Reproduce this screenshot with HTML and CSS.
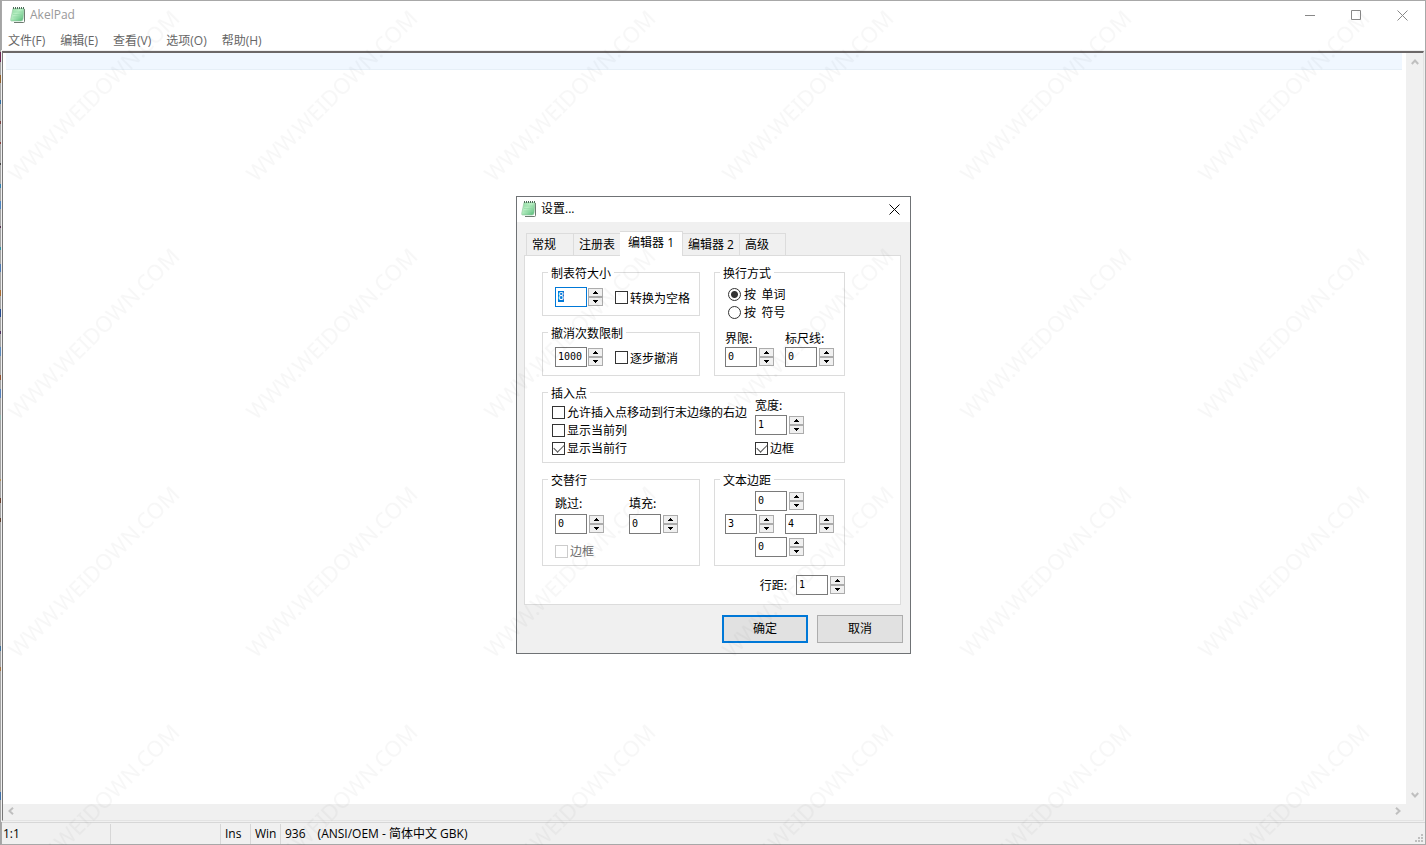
FILE: index.html
```
<!DOCTYPE html>
<html lang="zh-CN">
<head>
<meta charset="utf-8">
<title>AkelPad</title>
<link rel="stylesheet" href="styles.css">
</head>
<body>
<svg width="0" height="0" class="defs" aria-hidden="true">
  <defs>
    <linearGradient id="paper" x1="0" y1="0" x2="1" y2="1">
      <stop offset="0" stop-color="#8fd9a0"/><stop offset=".4" stop-color="#b9efc4"/><stop offset="1" stop-color="#4fb873"/>
    </linearGradient>
    <symbol id="notepad" viewBox="0 0 16 16">
      <path d="M4 15.500H13.500Q14.500 15.500 14.500 14.500V2" fill="none" stroke="#6d7a70"/>
      <path d="M3 1.500H14L13 12Q12.800 14 11 14H1.500Q.5 14 .7 12.500Z" fill="url(#paper)" stroke="#8cc49b" stroke-width=".6"/>
      <path d="M3 5H13M3 7.500H12.500M2.500 10H12" stroke="#8fd6a2" stroke-width=".6"/>
      <path d="M3 1H14" stroke="#4c6c58" stroke-width="2" stroke-dasharray="1 1"/>
    </symbol>
    <symbol id="up" viewBox="0 0 5 3"><path d="M2 0h1v1h1v1h1v1H0V2h1V1h1z"/></symbol>
    <symbol id="down" viewBox="0 0 5 3"><path d="M0 0h5v1H4v1H3v1H2V2H1V1H0z"/></symbol>
  </defs>
</svg>

<div class="window">
  <header class="titlebar">
    <svg class="app-icon"><use href="#notepad"/></svg>
    <h1 class="app-title">AkelPad</h1>
    <div class="caption">
      <button aria-label="最小化"><svg viewBox="0 0 11 11"><path d="M0 5.500H10"/></svg></button>
      <button aria-label="最大化"><svg viewBox="0 0 11 11"><path d="M.5.5H9.500V9.500H.5Z"/></svg></button>
      <button aria-label="关闭"><svg viewBox="0 0 11 11"><path d="M.5.5L10.500 10.500M10.500.5L.5 10.500"/></svg></button>
    </div>
  </header>
  <nav class="menubar">
    <button>文件(F)</button><button>编辑(E)</button><button>查看(V)</button><button>选项(O)</button><button>帮助(H)</button>
  </nav>
  <main class="editor">
    <div class="page"><div class="line"></div></div>
    <div class="vbar">
      <svg viewBox="0 0 8 6"><path d="M.8 5L4 1.500L7.200 5"/></svg>
      <svg viewBox="0 0 8 6"><path d="M.8 1L4 4.500L7.200 1"/></svg>
    </div>
    <div class="hbar">
      <svg viewBox="0 0 6 8"><path d="M5 .8L1.500 4L5 7.200"/></svg>
      <svg viewBox="0 0 6 8"><path d="M1 .8L4.500 4L1 7.200"/></svg>
    </div>
  </main>
  <footer class="status">
    <span class="pos">1:1</span><span class="sel"></span><span class="ins">Ins</span><span class="ins">Win</span>
    <span class="cp"><span>936</span><span>(ANSI/OEM - 简体中文 GBK)</span></span>
    <svg class="grip" viewBox="0 0 8 8"><path d="M6 0h2v2H6zM3 3h2v2H3zM6 3h2v2H6zM0 6h2v2H0zM3 6h2v2H3zM6 6h2v2H6z"/></svg>
  </footer>
</div>

<section class="dialog" role="dialog" aria-labelledby="dlg-title">
  <header class="dlg-head">
    <svg class="app-icon"><use href="#notepad"/></svg>
    <h2 id="dlg-title">设置...</h2>
    <button class="dlg-close" aria-label="关闭"><svg viewBox="0 0 11 11"><path d="M.5.5L10.500 10.500M10.500.5L.5 10.500"/></svg></button>
  </header>
  <div class="dlg-body">
    <div class="tabs" role="tablist">
      <button role="tab">常规</button><button role="tab">注册表</button><button role="tab" class="active" aria-selected="true">编辑器 1</button><button role="tab">编辑器 2</button><button role="tab">高级</button>
    </div>
    <div class="panel">
      <div class="groups">
        <div class="stack">
          <fieldset class="single">
            <legend>制表符大小</legend>
            <span class="spin tight"><input class="focus" type="text" value="8" id="tabsize" aria-label="制表符大小"><span class="arrows"><button aria-label="增加"><svg><use href="#up"/></svg></button><button aria-label="减少"><svg><use href="#down"/></svg></button></span></span>
            <label class="opt"><input type="checkbox">转换为空格</label>
          </fieldset>
          <fieldset class="single">
            <legend>撤消次数限制</legend>
            <span class="spin tight"><input type="text" value="1000" aria-label="撤消次数限制"><span class="arrows"><button aria-label="增加"><svg><use href="#up"/></svg></button><button aria-label="减少"><svg><use href="#down"/></svg></button></span></span>
            <label class="opt"><input type="checkbox">逐步撤消</label>
          </fieldset>
        </div>
        <fieldset class="wrap">
          <legend>换行方式</legend>
          <label class="opt"><input type="radio" name="wrap" checked>按  单词</label>
          <label class="opt"><input type="radio" name="wrap">按  符号</label>
          <div class="pair">
            <div class="field"><label for="limit">界限:</label><span class="spin"><input type="text" value="0" id="limit"><span class="arrows"><button aria-label="增加"><svg><use href="#up"/></svg></button><button aria-label="减少"><svg><use href="#down"/></svg></button></span></span></div>
            <div class="field"><label for="ruler">标尺线:</label><span class="spin"><input type="text" value="0" id="ruler"><span class="arrows"><button aria-label="增加"><svg><use href="#up"/></svg></button><button aria-label="减少"><svg><use href="#down"/></svg></button></span></span></div>
          </div>
        </fieldset>
        <fieldset class="caret">
          <legend>插入点</legend>
          <div class="checks">
            <label class="opt"><input type="checkbox">允许插入点移动到行末边缘的右边</label>
            <label class="opt"><input type="checkbox">显示当前列</label>
            <label class="opt"><input type="checkbox" checked>显示当前行</label>
          </div>
          <div class="width">
            <div class="field"><label for="cw">宽度:</label><span class="spin"><input type="text" value="1" id="cw"><span class="arrows"><button aria-label="增加"><svg><use href="#up"/></svg></button><button aria-label="减少"><svg><use href="#down"/></svg></button></span></span></div>
            <label class="opt"><input type="checkbox" checked>边框</label>
          </div>
        </fieldset>
        <fieldset class="alt">
          <legend>交替行</legend>
          <div class="pair">
            <div class="field"><label for="skip">跳过:</label><span class="spin"><input type="text" value="0" id="skip"><span class="arrows"><button aria-label="增加"><svg><use href="#up"/></svg></button><button aria-label="减少"><svg><use href="#down"/></svg></button></span></span></div>
            <div class="field"><label for="fill">填充:</label><span class="spin"><input type="text" value="0" id="fill"><span class="arrows"><button aria-label="增加"><svg><use href="#up"/></svg></button><button aria-label="减少"><svg><use href="#down"/></svg></button></span></span></div>
          </div>
          <label class="opt off"><input type="checkbox" disabled>边框</label>
        </fieldset>
        <fieldset class="margins">
          <legend>文本边距</legend>
          <div class="cross">
            <span class="spin"><input type="text" value="0" aria-label="上"><span class="arrows"><button aria-label="增加"><svg><use href="#up"/></svg></button><button aria-label="减少"><svg><use href="#down"/></svg></button></span></span>
            <div class="sides">
              <span class="spin"><input type="text" value="3" aria-label="左"><span class="arrows"><button aria-label="增加"><svg><use href="#up"/></svg></button><button aria-label="减少"><svg><use href="#down"/></svg></button></span></span>
              <span class="spin"><input type="text" value="4" aria-label="右"><span class="arrows"><button aria-label="增加"><svg><use href="#up"/></svg></button><button aria-label="减少"><svg><use href="#down"/></svg></button></span></span>
            </div>
            <span class="spin"><input type="text" value="0" aria-label="下"><span class="arrows"><button aria-label="增加"><svg><use href="#up"/></svg></button><button aria-label="减少"><svg><use href="#down"/></svg></button></span></span>
          </div>
        </fieldset>
      </div>
      <div class="spacing"><label for="gap">行距:</label><span class="spin"><input type="text" value="1" id="gap"><span class="arrows"><button aria-label="增加"><svg><use href="#up"/></svg></button><button aria-label="减少"><svg><use href="#down"/></svg></button></span></span></div>
    </div>
    <div class="actions"><button class="primary">确定</button><button>取消</button></div>
  </div>
</section>

<svg class="watermark" aria-hidden="true">
  <defs>
    <pattern id="mark" width="238" height="238" patternUnits="userSpaceOnUse">
      <text transform="translate(18 183) rotate(-45)">WWW.WEIDOWN.COM</text>
    </pattern>
  </defs>
  <rect width="100%" height="100%" fill="url(#mark)"/>
</svg>
<script src="main.js"></script>
</body>
</html>
```
FILE: styles.css
```
* { box-sizing: border-box; }
html, body { height: 100%; }
body {
  margin: 0; padding-left: 1px; color: #000; overflow: hidden;
  font: 12px/16px "Open Sans", "Noto Sans CJK SC", sans-serif;
  /* sliver of the desktop left of the window */
  background: linear-gradient(#a4a4a4 52px, #6b2450 52px 62px, #a4a4a4 62px 75px, #8f5f2a 75px 83px, #a4a4a4 83px 100px, #2c6aa0 100px 104px, #a4a4a4 104px 121px, #7a4040 121px 124px, #a4a4a4 124px 142px, #8a3c3c 142px 144px, #a4a4a4 144px 163px, #444 163px 165px, #a4a4a4 165px 184px, #2f7fb0 184px 188px, #a4a4a4 188px 201px, #4d84c0 201px 209px, #a4a4a4 209px 226px, #573050 226px 228px, #a4a4a4 228px 247px, #2f8fa0 247px 250px, #a4a4a4 250px 264px, #4d78b0 264px 272px, #a4a4a4 272px 290px, #a86a30 290px 296px, #a4a4a4 296px 309px, #254a90 309px 317px, #a4a4a4 317px 331px, #503060 331px 334px, #a4a4a4 334px 347px, #5a88bb 347px 356px, #a4a4a4 356px 375px, #905030 375px 380px, #a4a4a4 380px 389px, #5580bb 389px 398px, #a4a4a4 398px 415px, #8fb5b0 415px 420px, #a4a4a4 420px 479px, #b08a50 479px 481px, #a4a4a4 481px 498px, #6a4030 498px 503px, #a4a4a4 503px 518px, #604030 518px 522px, #a4a4a4 522px 646px, #3f6f98 646px 651px, #a4a4a4 651px 667px, #a07040 667px 671px, #a4a4a4 671px 792px, #4070a8 792px 800px, #a4a4a4 800px);
}
button { font: inherit; color: inherit; border: 0; background: none; padding: 0; white-space: nowrap; }
h1, h2 { margin: 0; font-size: 12px; font-weight: 400; }
svg { display: block; }
.defs { position: absolute; }

/* main window */
.window { min-height: 100vh; display: flex; flex-direction: column; border: 1px solid #a8a8a8; background: #fff; }
.app-icon { width: 16px; height: 16px; flex: none; }
.titlebar { display: flex; align-items: center; height: 28px; padding-left: 8px; color: #999; }
.titlebar h1 { flex: 1; padding-left: 4px; }
.caption { display: flex; }
.caption button { width: 46px; height: 28px; display: grid; place-items: center; }
.caption svg, .dlg-close svg { width: 11px; height: 11px; fill: none; stroke: #888; }
.menubar { display: flex; gap: 15px; height: 21px; padding: 2px 0 0 6px; color: #666; align-items: center; }
.editor { flex: 1; display: grid; grid-template: 1fr 16px / 1fr 17px; border: solid; border-width: 2px 1px 1px; border-color: #6c6868 #e3e3e3 #e3e3e3 #777; margin: 1px 1px 1px 0; outline: 1px solid #f0f0f0; background: #f0f0f0; }
.page { background: #fff; padding: 0 4px 0 3px; }
.line { height: 17px; background: #f0f7ff; border-bottom: 1px solid #e6eff7; }
.vbar { display: flex; flex-direction: column; justify-content: space-between; align-items: center; padding: 6px 0; }
.hbar { display: flex; justify-content: space-between; align-items: center; padding: 0 5px 2px 5px; }
.vbar svg { width: 8px; height: 6px; }
.hbar svg { width: 6px; height: 8px; }
.vbar svg, .hbar svg { fill: none; stroke: #bfbfbf; stroke-width: 2; }
.status { display: flex; height: 22px; background: #f0f0f0; border-top: 1px solid #d7d7d7; line-height: 20px; padding-left: 1px; }
.status > span { border-right: 1px solid #d7d7d7; margin-top: 1px; }
.status .pos { width: 108px; }
.status .sel { width: 110px; }
.status .ins { width: 30px; padding-left: 4px; }
.status .cp { flex: 1; display: flex; gap: 12px; padding-left: 4px; border: 0; }
.grip { width: 8px; height: 8px; align-self: flex-end; margin: 0 2px 2px; fill: #bfbfbf; }

/* settings dialog floating over the editor */
.dialog { position: absolute; left: 516px; top: 196px; width: 395px; border: 1px solid #6f7275; background: #f0f0f0; }
.dlg-head { display: flex; align-items: center; height: 25px; background: #fff; padding: 0 10px 1px 4px; }
.dlg-head h2 { flex: 1; padding-left: 4px; }
.dlg-close svg { stroke: #000; }
.dlg-body { padding: 9px 7px 10px; }
.tabs { display: flex; align-items: flex-end; padding-left: 2px; }
.tabs button { height: 22px; padding: 0 5px; border: 1px solid #dcdcdc; border-bottom: 0; border-left: 0; min-width: 46px; text-align: left; }
.tabs button:first-child { border-left: 1px solid #dcdcdc; min-width: 48px; }
.tabs .active { height: 25px; padding: 0 8px 3px; margin: 0 0 -1px -1px; background: #fff; }
.panel { margin-right: 2px; background: #fff; border: 1px solid #dcdcdc; padding: 10px 55px 9px 17px; }
.panel { font-family: "Noto Sans CJK SC", sans-serif; }
.groups { display: grid; grid-template-columns: 158px 131px; column-gap: 14px; row-gap: 10px; margin-bottom: 9px; }
.stack { display: grid; row-gap: 10px; }
fieldset { --inset: 0px; margin: 0; padding: 0 0 0 var(--inset); min-width: 0; border: 1px solid #dcdcdc; }
legend { margin-left: calc(5px - var(--inset)); padding: 0 3px; line-height: 13px; height: 13px; }
.single { --inset: 12px; display: flex; gap: 12px; padding-top: 8px; height: 50px; }
.single .opt { height: 21px; }
.opt { display: flex; align-items: center; gap: 2px; height: 18px; white-space: pre; }
.opt input { appearance: none; margin: 0; width: 13px; height: 13px; flex: none; border: 1px solid #333; background: #fff; }
.opt input[type=radio] { border-radius: 50%; }
.opt input[type=radio]:checked { background: radial-gradient(circle, #333 0 3px, #fff 4px); }
.opt input[type=checkbox]:checked { display: grid; place-items: center; }
.opt input[type=checkbox]:checked::before { content: ""; width: 9px; height: 5px; border: solid #555; border-width: 0 0 1px 1px; transform: rotate(-45deg); margin-bottom: 3px; }
.off { color: #6d6d6d; }
.opt.off input { border-color: #ccc; }
.spin { display: flex; gap: 2px; align-items: center; height: 20px; }
.spin.tight { gap: 1px; }
.spin input { width: 32px; height: 20px; border: 1px solid #7a7a7a; padding: 0 2px 2px; background: #fff; font: 10px/14px "DejaVu Sans Mono", monospace; outline: 0; border-radius: 0; }
.spin .focus { border-color: #0078d7; }
.focus::selection { background: #0078d7; color: #fff; }
.arrows { display: grid; width: 15px; }
.arrows button { height: 9px; border: 1px solid #acacac; background: #f0f0f0; display: grid; place-items: center; }
.arrows svg { width: 5px; height: 3px; }
.field > label { display: block; height: 18px; line-height: 18px; }
.pair { display: flex; gap: 11px; }
.wrap { --inset: 10px; padding-top: 6px; }
.wrap .opt { margin-left: 3px; gap: 3px; }
.wrap .pair { padding-top: 8px; }
.caret { --inset: 9px; grid-column: 1 / 3; display: flex; height: 77px; }
.checks { width: 203px; padding-top: 4px; }
.width .field > label { height: 16px; line-height: 12px; }
.width .opt { margin-top: 4px; }
.alt { --inset: 12px; padding-top: 8px; height: 93px; }
.alt .pair { gap: 25px; }
.alt .field > label { height: 20px; }
.alt .off { margin-top: 8px; }
.cross { display: grid; justify-items: center; gap: 3px; padding-top: 5px; }
.sides { display: flex; gap: 11px; }
.spacing { display: flex; justify-content: flex-end; align-items: center; gap: 9px; }
.actions { display: flex; justify-content: flex-end; gap: 9px; padding-top: 10px; }
.actions button { width: 86px; height: 28px; border: 1px solid #adadad; background: #e1e1e1; }
.actions .primary { border: 2px solid #0078d7; }

.watermark { position: absolute; left: 0; top: 0; width: 100%; height: 100%; pointer-events: none; }
.watermark text { font: 22px "Noto Sans", sans-serif; fill: #000; fill-opacity: .03; }
```
FILE: main.js
```
document.getElementById("tabsize").select();
```
